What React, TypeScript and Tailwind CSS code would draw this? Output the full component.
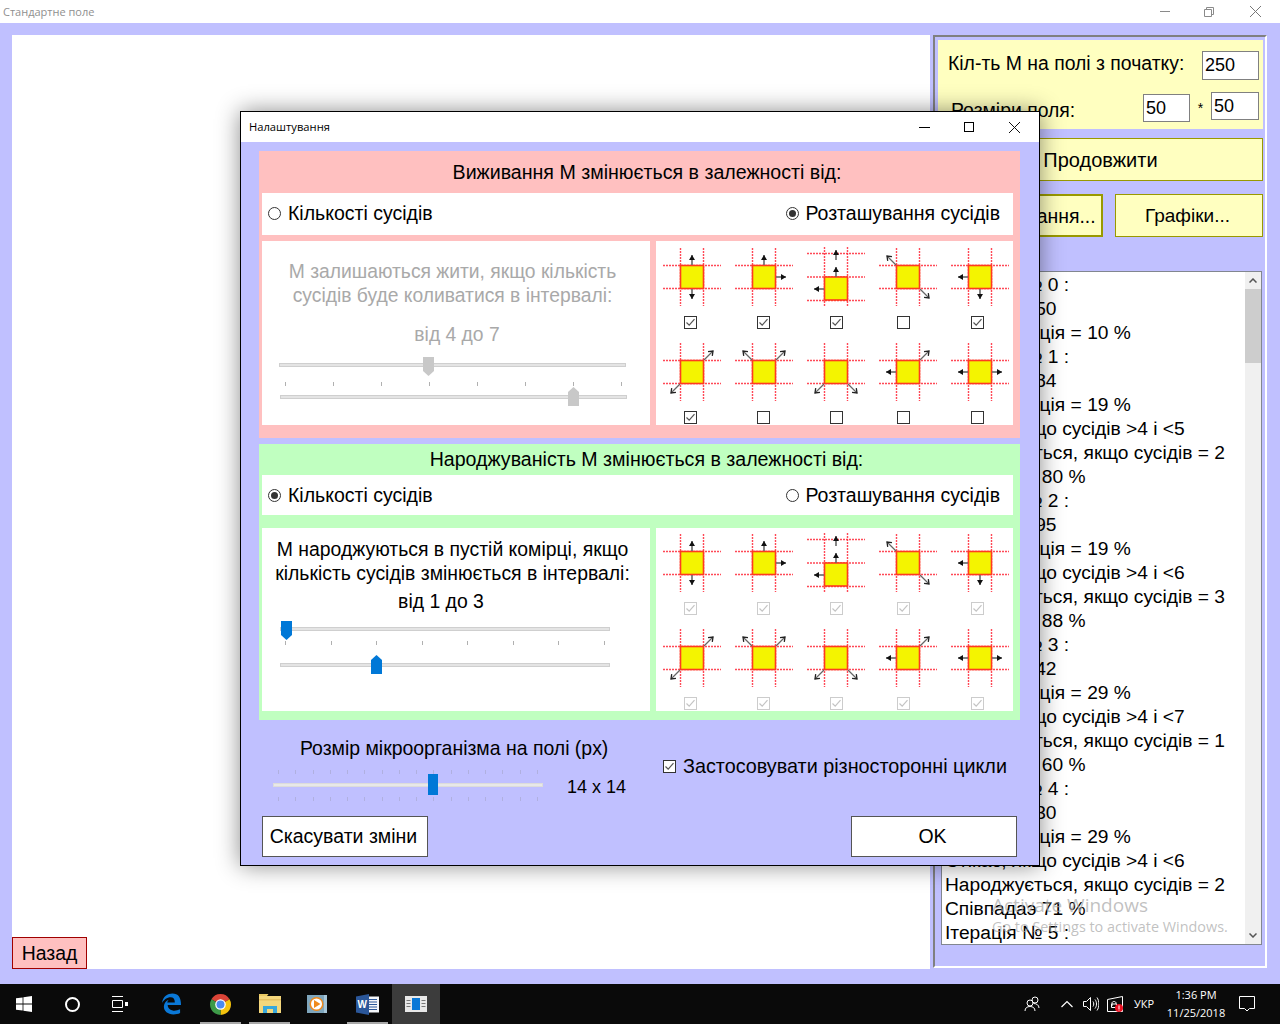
const dirs: Record<string, [number, number, number, number]> = {
  n: [29, 17, 29, 7],
  s: [29, 41, 29, 51],
  e: [41, 29, 51, 29],
  w: [17, 29, 7, 29],
  ne: [41, 17, 50, 8],
  nw: [17, 17, 8, 8],
  se: [41, 41, 50, 50],
  sw: [17, 41, 8, 50],
};

const Arrow = ({ x1, y1, x2, y2 }: { x1: number; y1: number; x2: number; y2: number }) => {
  const a = Math.atan2(y2 - y1, x2 - x1);
  const diagonal = x1 !== x2 && y1 !== y2;
  const p = (len: number, off: number) =>
    `${x2 - Math.cos(a) * len + Math.cos(a + Math.PI / 2) * off},${y2 - Math.sin(a) * len + Math.sin(a + Math.PI / 2) * off}`;
  return (
    <g>
      <line stroke="#666" strokeWidth={diagonal ? 1.2 : 1.6} x1={x1} x2={x2} y1={y1} y2={y2} />
      {diagonal ? (
        <polyline fill="none" points={`${p(4, 3)} ${p(0, 0)} ${p(4, -3)}`} stroke="#222" strokeWidth="1.3" />
      ) : (
        <polygon fill="#111" points={`${p(5, 3)} ${p(0, 0)} ${p(5, -3)}`} />
      )}
    </g>
  );
};

const NeighbourIcon = ({ arrows, tall }: { arrows?: string[]; tall?: boolean }) => {
  const lines = tall ? [5.5, 29, 52.5] : [17.5, 40.5];
  const sq = tall ? 29 : 17.5;
  return (
    <svg className="block overflow-visible" height="58" viewBox="0 0 58 58" width="58">
      {lines.map((y) => (
        <line key={y} opacity="0.85" stroke="#ff2a3a" strokeDasharray="2 1" strokeWidth="1.4" x1="0" x2="58" y1={y} y2={y} />
      ))}
      {[17.5, 40.5].map((x) => (
        <line
          key={x}
          opacity="0.85"
          stroke="#ff2a3a"
          strokeDasharray="2 1"
          strokeWidth="1.4"
          x1={x}
          x2={x}
          y1={tall ? -1 : 0}
          y2={tall ? 59 : 58}
        />
      ))}
      <rect fill="#f4f400" height="23" stroke="#ff3b20" strokeWidth="1.6" width="23" x="17.5" y={sq} />
      {tall ? (
        <>
          <Arrow x1={29} x2={29} y1={29} y2={19} />
          <Arrow x1={29} x2={29} y1={12} y2={2} />
          <Arrow x1={17} x2={7} y1={41} y2={41} />
        </>
      ) : (
        arrows?.map((d) => {
          const [x1, y1, x2, y2] = dirs[d];
          return <Arrow key={d} x1={x1} x2={x2} y1={y1} y2={y2} />;
        })
      )}
    </svg>
  );
};

const Check = ({ checked, disabled, className }: { checked?: boolean; disabled?: boolean; className?: string }) => (
  <div
    className={`flex h-[13px] w-[13px] shrink-0 items-center justify-center border bg-white ${
      disabled ? 'border-[#cccccc]' : 'border-[#333333]'
    } ${className ?? ''}`}
  >
    {checked && (
      <svg height="11" viewBox="0 0 11 11" width="11">
        <path d="M1.5 5.5 L4.2 8.2 L9.5 2.2" fill="none" stroke={disabled ? '#c4c4c4' : '#555'} strokeWidth="1.2" />
      </svg>
    )}
  </div>
);

const Radio = ({ on }: { on?: boolean }) => (
  <div className="flex h-[13px] w-[13px] items-center justify-center rounded-full border border-[#333333] bg-white">
    {on && <div className="h-[7px] w-[7px] rounded-full bg-[#333333]" />}
  </div>
);

const iconCols = ['ml-[21px]', 'ml-[22px]', 'ml-[23px]', 'ml-[18px]', 'ml-[20px]'];

const IconGrid = ({
  checks,
  disabled,
  className,
}: {
  checks: boolean[];
  disabled?: boolean;
  className: string;
}) => {
  const cells: { arrows?: string[]; tall?: boolean }[] = [
    { arrows: ['n', 's'] },
    { arrows: ['n', 'e'] },
    { tall: true },
    { arrows: ['nw', 'se'] },
    { arrows: ['w', 's'] },
    { arrows: ['ne', 'sw'] },
    { arrows: ['nw', 'ne'] },
    { arrows: ['sw', 'se'] },
    { arrows: ['w', 'ne'] },
    { arrows: ['w', 'e'] },
  ];
  return (
    <div
      className={`grid w-[357px] grid-cols-[72px_72px_72px_72px_58px] content-start gap-y-[14px] bg-white pl-[7px] ${className}`}
    >
      {cells.map((c, i) => (
        <div key={i}>
          <NeighbourIcon arrows={c.arrows} tall={c.tall} />
          <Check checked={checks[i]} className={`mt-[10px] ${iconCols[i % 5]}`} disabled={disabled} />
        </div>
      ))}
    </div>
  );
};

const Track = ({
  className,
  thumbClass,
  up,
  color,
}: {
  className: string;
  thumbClass: string;
  up?: boolean;
  color: string;
}) => (
  <div className={`relative h-[4px] border border-[#cfcfcf] bg-[#e4e4e4] ${className}`}>
    <svg className={`absolute ${up ? '-top-[9px]' : '-top-[7px]'} ${thumbClass}`} height="19" viewBox="0 0 11 19" width="11">
      <polygon fill={color} points={up ? '5.5,0 11,5 11,19 0,19 0,5' : '0,0 11,0 11,14 5.5,19 0,14'} />
    </svg>
  </div>
);

const Ticks = ({ className, count = 8, tick }: { className: string; count?: number; tick: string }) => (
  <div className={`flex justify-between ${className}`}>
    {Array.from({ length: count }).map((_, i) => (
      <div className={`h-[4px] w-px ${tick}`} key={i} />
    ))}
  </div>
);

const RadioRow = ({ first, className }: { first: boolean; className: string }) => (
  <div className={`flex items-center justify-between bg-white pr-[13px] pl-[6px] ${className}`}>
    <div className="flex items-center gap-[7px]">
      <Radio on={first} />
      <span>Кількості сусідів</span>
    </div>
    <div className="flex items-center gap-[6px]">
      <Radio on={!first} />
      <span>Розташування сусідів</span>
    </div>
  </div>
);

const log = [
  'Ітерація № 0 :',
  'К-ть М = 250',
  'Концентрація = 10 %',
  'Ітерація № 1 :',
  'К-ть М = 484',
  'Концентрація = 19 %',
  'Стікає, якщо сусідів >4 і <5',
  'Народжується, якщо сусідів = 2',
  'Співпадає 80 %',
  'Ітерація № 2 :',
  'К-ть М = 495',
  'Концентрація = 19 %',
  'Стікає, якщо сусідів >4 і <6',
  'Народжується, якщо сусідів = 3',
  'Співпадає 88 %',
  'Ітерація № 3 :',
  'К-ть М = 742',
  'Концентрація = 29 %',
  'Стікає, якщо сусідів >4 і <7',
  'Народжується, якщо сусідів = 1',
  'Співпадає 60 %',
  'Ітерація № 4 :',
  'К-ть М = 730',
  'Концентрація = 29 %',
  'Стікає, якщо сусідів >4 і <6',
  'Народжується, якщо сусідів = 2',
  'Співпадаэ 71 %',
  'Ітерація № 5 :',
];

const TaskCell = ({ children, active, open, className }: { children: React.ReactNode; active?: boolean; open?: boolean; className?: string }) => (
  <div className={`relative flex h-full items-center justify-center ${active ? 'bg-[#3c3c3c]' : ''} ${className ?? 'w-[49px]'}`}>
    {children}
    {open && <div className="absolute right-[4px] bottom-0 left-[4px] h-[2px] bg-[#a8a8a8]" />}
  </div>
);

const Taskbar = () => (
  <div className="flex h-[40px] items-center bg-[#0a0a0a] text-white">
    <TaskCell className="w-[48px]">
      <svg height="16" viewBox="0 0 16 16" width="16">
        <path d="M0 2.3 L6.6 1.4 V7.6 H0Z M7.4 1.3 L16 0 V7.6 H7.4Z M0 8.4 H6.6 V14.6 L0 13.7Z M7.4 8.4 H16 V16 L7.4 14.7Z" fill="#fff" />
      </svg>
    </TaskCell>
    <TaskCell className="w-[48px]">
      <div className="h-[15px] w-[15px] rounded-full border-2 border-white" />
    </TaskCell>
    <TaskCell className="w-[51px] pr-[3px]">
      <svg fill="none" height="16" stroke="#fff" viewBox="0 0 16 16" width="16">
        <path d="M0 .5 H11 M0 15.5 H11 M.5 4.5 H10.5 V11.5 H.5Z M13 6.5 H16 M13 9.5 H16" />
        <rect fill="#fff" height="3" stroke="none" width="3" x="13" y="6" />
      </svg>
    </TaskCell>
    <TaskCell>
      <svg height="22" viewBox="0 0 22 22" width="21">
        <path
          d="M1 10 C2 3 7 0 12 0 C18 0 21 4 21 12 H7 C7 16 11 18 14 18 C16 18 18 17.500 20 16.500 V20.500 C18 21.500 15.500 22 13 22 C7 22 3 18.500 3 14 C3 11 4.500 8 8 6.500 C7 8 6.600 8.800 6.500 9.500 H14.500 C14.500 6 13 4 10 4 C6.500 4 3 6.500 1 10Z"
          fill="#0a78d7"
        />
      </svg>
    </TaskCell>
    <TaskCell open>
      <svg height="23" viewBox="0 0 24 24" width="23">
        <path d="M12 1 A11 11 0 0 1 21.500 6.500 L12 12 L2.500 6.500 A11 11 0 0 1 12 1Z" fill="#db4437" />
        <path d="M21.500 6.500 A11 11 0 0 1 12 23 L12 12Z" fill="#f4c20d" />
        <path d="M2.500 6.500 A11 11 0 0 0 12 23 L12 12Z" fill="#3d9a48" />
        <circle cx="12" cy="12" fill="#fff" r="5.500" />
        <circle cx="12" cy="12" fill="#4a8af0" r="4.200" />
      </svg>
    </TaskCell>
    <TaskCell open>
      <svg height="20" viewBox="0 0 22 20" width="22">
        <path d="M0 2 H8 L9.500 0 H0Z" fill="#e8c862" />
        <rect fill="#f4d77c" height="17" width="22" y="2" />
        <rect fill="#e5c060" height="1.500" width="22" y="5" />
        <path d="M4 19 V12 H18 V19 H14 V15 H8 V19Z" fill="#38a8dc" />
      </svg>
    </TaskCell>
    <TaskCell className="w-[49px] pr-[3px]">
      <svg height="20" viewBox="0 0 20 20" width="20">
        <rect fill="#7fa6bd" height="18" width="20" y="1" />
        <rect fill="#a8c6d8" height="18" width="3" x="17" y="1" />
        <circle cx="9.500" cy="10" fill="#f08a1c" r="7" />
        <circle cx="9.500" cy="10" fill="#fff" r="5.500" />
        <polygon fill="#f08a1c" points="7,6 13.500,10 7,14" />
      </svg>
    </TaskCell>
    <TaskCell open>
      <svg height="21" viewBox="0 0 23 21" width="23">
        <rect fill="#f4f6fa" height="16" width="12" x="11" y="2.500" />
        <path d="M13 5.500 H21 M13 8 H21 M13 10.500 H21 M13 13 H21 M13 15.500 H21" stroke="#2b579a" />
        <polygon fill="#2b579a" points="0,2.500 13,0 13,21 0,18.500" />
        <text fill="#fff" fontFamily="'Liberation Sans', sans-serif" fontSize="10" fontWeight="700" x="1.500" y="14">
          W
        </text>
      </svg>
    </TaskCell>
    <TaskCell active className="w-[48px]">
      <svg height="16" viewBox="0 0 22 16" width="22">
        <rect fill="#e8e8e8" height="16" width="22" />
        <rect fill="#0a78d7" height="12" width="8" x="7" y="2" />
        <path d="M1.500 4.500 H5.500 M1.500 7.500 H5.500 M1.500 10.500 H5.500 M16.500 4.500 H20.500 M16.500 7.500 H20.500 M16.500 10.500 H20.500" stroke="#777" />
      </svg>
    </TaskCell>

    <div className="ml-[572px] flex h-full items-center">
      <TaskCell className="w-[40px]">
        <svg fill="none" height="16" stroke="#fff" viewBox="0 0 16 16" width="16">
          <circle cx="11" cy="4" r="3" />
          <circle cx="6" cy="7" r="3" />
          <path d="M1 15 C1 12 3 10.500 6 10.500 C9 10.500 11 12 11 15 M9.500 7.500 C12.500 7.500 15 9 15 12" />
        </svg>
      </TaskCell>
      <TaskCell className="ml-[3px] w-[24px]">
        <svg fill="none" height="8" stroke="#fff" strokeWidth="1.200" viewBox="0 0 12 8" width="12">
          <path d="M.5 7 L6 1.500 L11.500 7" />
        </svg>
      </TaskCell>
      <TaskCell className="w-[24px]">
        <svg fill="none" height="16" stroke="#fff" viewBox="0 0 16 16" width="16">
          <path d="M.5 5.500 H3.500 L7.500 1.500 V14.500 L3.500 10.500 H.5Z M10 5.500 C11 7 11 9 10 10.500 M12 3.500 C14 6 14 10 12 12.500 M14 1.500 C16.500 5 16.500 11 14 14.500" />
        </svg>
      </TaskCell>
      <TaskCell className="w-[24px]">
        <svg height="16" viewBox="0 0 16 16" width="16">
          <path d="M.5 3.500 L15.500 .5 V15.500 H.5Z" fill="none" stroke="#fff" />
          <path d="M5 10 V7 C5 5 9 5 9 7 V8 M4.500 8 H9.500 V11.500 H4.500Z" fill="none" stroke="#fff" />
          <circle cx="12" cy="12" fill="#e81123" r="4" />
          <rect fill="#fff" height="3.500" width="1" x="11.500" y="9.500" />
          <rect fill="#fff" height="1" width="1" x="11.500" y="13.500" />
        </svg>
      </TaskCell>
      <TaskCell className="w-[34px]">
        <span className="font-['Open_Sans',sans-serif] text-[11px]">УКР</span>
      </TaskCell>
      <div className="flex w-[70px] flex-col items-center text-center font-['Open_Sans',sans-serif] text-[11px] leading-[18px]">
        <span>1:36 PM</span>
        <span>11/25/2018</span>
      </div>
      <TaskCell className="ml-[4px] w-[24px]">
        <svg fill="none" height="16" stroke="#fff" viewBox="0 0 16 16" width="16">
          <path d="M.5 .5 H15.500 V12.500 H10.500 L8 15 L5.500 12.500 H.5Z" />
        </svg>
      </TaskCell>
    </div>
  </div>
);

const Dialog = () => (
  <div className="absolute top-[111px] left-[240px] flex h-[755px] w-[800px] flex-col border border-black bg-[#c0c0ff] text-[19.5px] leading-[24px] text-black shadow-[0_0_22px_rgba(0,0,0,0.45)]">
    <div className="flex h-[30px] items-center justify-between bg-white pr-[2px] pl-[8px]">
      <span className="font-['Open_Sans',sans-serif] text-[11.200px]">Налаштування</span>
      <div className="flex h-full">
        <div className="flex w-[45px] items-center justify-center">
          <div className="h-px w-[11px] bg-black" />
        </div>
        <div className="flex w-[45px] items-center justify-center pr-[1px]">
          <div className="h-[10px] w-[10px] border border-black" />
        </div>
        <div className="flex w-[45px] items-center justify-center">
          <svg height="11" stroke="#111" viewBox="0 0 11 11" width="11">
            <path d="M0 0 L11 11 M11 0 L0 11" />
          </svg>
        </div>
      </div>
    </div>

    <div className="flex flex-col pt-[9px] pl-[18px]">
      {/* Виживання */}
      <div className="h-[287px] w-[761px] bg-[#ffc0c0] pl-[3px]">
        <div className="pt-[9px] pl-[12px] text-center text-[19.600px]">Виживання М змінюється в залежності від:</div>
        <RadioRow className="mt-[9px] h-[42px] w-[751px] pb-[2px]" first={false} />
        <div className="mt-[6px] flex gap-[6px]">
          <div className="h-[184px] w-[388px] bg-white pt-[19px] text-[19.300px] text-[#a9a9a9]">
            <div className="pr-[7px] text-center">
              М залишаються жити, якщо кількість
              <br />
              сусідів буде коливатися в інтервалі:
            </div>
            <div className="mt-[15px] pl-[2px] text-center">від 4 до 7</div>
            <Track className="mt-[16px] ml-[17px] w-[347px]" color="#c8c8c8" thumbClass="left-[143px]" />
            <Ticks className="mt-[15px] ml-[23px] w-[337px]" tick="bg-[#b0b0b0]" />
            <Track className="mt-[9px] ml-[18px] w-[347px]" color="#c8c8c8" thumbClass="left-[287px]" up />
          </div>
          <IconGrid
            checks={[true, true, true, false, true, true, false, false, false, false]}
            className="h-[184px] pt-[7px]"
          />
        </div>
      </div>

      {/* Народжуваність */}
      <div className="mt-[6px] h-[276px] w-[761px] bg-[#c0ffc0] pl-[3px]">
        <div className="pt-[3px] pl-[11px] text-center text-[19.600px]">Народжуваність М змінюється в залежності від:</div>
        <RadioRow className="mt-[4px] h-[40px] w-[751px]" first />
        <div className="mt-[13px] flex gap-[6px]">
          <div className="h-[183px] w-[388px] bg-white pt-[9px] text-[19.400px]">
            <div className="pr-[7px] text-center">
              М народжуються в пустій комірці, якщо
              <br />
              кількість сусідів змінюється в інтервалі:
            </div>
            <div className="mt-[4px] pr-[30px] text-center">від 1 до 3</div>
            <Track className="mt-[14px] ml-[18px] w-[330px]" color="#0078d7" thumbClass="left-0" />
            <Ticks className="mt-[10px] ml-[23px] w-[320px]" tick="bg-[#b0b0b0]" />
            <Track className="mt-[18px] ml-[18px] w-[330px]" color="#0078d7" thumbClass="left-[90px]" up />
          </div>
          <IconGrid checks={Array(10).fill(true)} className="h-[183px] pt-[6px]" disabled />
        </div>
      </div>

      {/* Розмір */}
      <div className="flex w-[761px]">
        <div className="w-[404px] pt-[16px] pl-[14px]">
          <div className="ml-[27px] text-[19.450px]">Розмір мікроорганізма на полі (px)</div>
          <div className="mt-[10px] flex items-center">
            <div className="relative w-[270px]">
              <Ticks className="ml-[5px] w-[260px]" count={16} tick="bg-[#b0b0e0]" />
              <div className="mt-[9px] h-[4px] border border-[#dcdcdc] bg-[#e8e8e8]" />
              <Ticks className="mt-[10px] ml-[5px] w-[260px]" count={16} tick="bg-[#b0b0e0]" />
              <div className="absolute top-[4px] left-[155px] h-[21px] w-[10px] bg-[#0078d7]" />
            </div>
            <span className="ml-[24px] pt-[2px] text-[18px]">14 x 14</span>
          </div>
        </div>
        <div className="flex items-center gap-[7px] self-start pt-[34px] text-[19.800px]">
          <Check checked />
          <span>Застосовувати різносторонні цикли</span>
        </div>
      </div>

      <div className="mt-[15px] ml-[3px] flex w-[755px] justify-between">
        <div className="flex h-[41px] w-[166px] items-center justify-center border border-[#555555] bg-white pr-[3px] pb-[2px]">
          Скасувати зміни
        </div>
        <div className="flex h-[41px] w-[166px] items-center justify-center border border-[#555555] bg-white pr-[3px] pb-[2px]">OK</div>
      </div>
    </div>
  </div>
);

export default function App() {
  return (
    <div className="relative flex h-[1024px] w-[1280px] flex-col overflow-hidden bg-[#c0c0ff] font-['Liberation_Sans',sans-serif] text-[19.400px] leading-[24px] text-black">
      {/* title bar */}
      <div className="flex h-[23px] items-center justify-between bg-white pr-[2px] pl-[3px]">
        <span className="font-['Open_Sans',sans-serif] text-[11px] text-[#8f8f8f]">Стандартне поле</span>
        <div className="flex h-full">
          <div className="flex w-[45px] items-center justify-center pl-[2px]">
            <div className="h-px w-[10px] bg-[#8a8a8a]" />
          </div>
          <div className="flex w-[47px] items-center justify-center pr-[2px]">
            <svg fill="none" height="10" stroke="#8a8a8a" viewBox="0 0 10 10" width="10">
              <path d="M.5 2.500 H7.500 V9.500 H.5Z M2.500 2.500 V.5 H9.500 V7.500 H7.500" />
            </svg>
          </div>
          <div className="flex w-[45px] items-center justify-center">
            <svg height="11" stroke="#777" viewBox="0 0 11 11" width="11">
              <path d="M0 0 L11 11 M11 0 L0 11" />
            </svg>
          </div>
        </div>
      </div>

      {/* main */}
      <div className="flex h-[961px] pt-[12px] pl-[12px]">
        <div className="flex h-[934px] w-[918px] flex-col justify-end bg-white">
          <div className="flex h-[32px] w-[75px] items-center justify-center border border-[#a00000] bg-[#ffc0c0]">
            Назад
          </div>
        </div>

        <div className="ml-[3px] h-[933px] w-[334px] border-2 border-t-[#808080] border-r-white border-b-white border-l-[#808080] pt-[3px] pl-[3px]">
          <div className="h-[89px] w-[325px] bg-[#ffffc0]">
            <div className="flex pt-[11px]">
              <span className="ml-[10px]">Кіл-ть М на полі з початку:</span>
              <div className="mr-[4px] ml-auto h-[29px] w-[57px] border border-[#808080] bg-white pt-[1px] pl-[2px] text-[18px]">250</div>
            </div>
            <div className="mt-[12px] flex items-start">
              <span className="mt-[6px] ml-[13px]">Розміри поля:</span>
              <div className="mt-[2px] ml-auto h-[28px] w-[47px] border border-[#808080] bg-white pt-[1px] pl-[2px] text-[18px]">50</div>
              <span className="mt-[4px] w-[21px] text-center text-[14px]">*</span>
              <div className="mr-[4px] h-[28px] w-[48px] border border-[#808080] bg-white pt-[1px] pl-[2px] text-[18px]">50</div>
            </div>
          </div>

          <div className="mt-[9px] flex h-[43px] w-[325px] items-center justify-center border border-[#999900] bg-[#ffffc0] pt-[1px] text-[20px]">
            Продовжити
          </div>
          <div className="mt-[13px] flex w-[325px] gap-[12px]">
            <div className="flex h-[43px] w-[165px] items-center justify-center border-2 border-[#999900] bg-[#ffffc0]">
              Налаштування...
            </div>
            <div className="flex h-[43px] w-[148px] items-center justify-center border border-[#999900] bg-[#ffffc0] pr-[3px] text-[19px]">
              Графіки...
            </div>
          </div>

          <div className="mt-[34px] ml-[3px] flex h-[674px] w-[321px] border border-[#828790] bg-white">
            <div className="h-full flex-1 overflow-hidden pt-px pl-[3px] text-[19.200px] whitespace-nowrap">
              {log.map((line, i) => (
                <div className="h-[24px]" key={i}>
                  {line}
                </div>
              ))}
            </div>
            <div className="flex w-[16px] flex-col bg-[#f0f0f0]">
              <div className="flex h-[17px] items-center justify-center">
                <svg fill="none" height="5" stroke="#555" strokeWidth="1.500" viewBox="0 0 8 5" width="8">
                  <path d="M.5 4.500 L4 1 L7.500 4.500" />
                </svg>
              </div>
              <div className="h-[74px] bg-[#cdcdcd]" />
              <div className="flex-1" />
              <div className="flex h-[17px] items-center justify-center">
                <svg fill="none" height="5" stroke="#555" strokeWidth="1.500" viewBox="0 0 8 5" width="8">
                  <path d="M.5 .5 L4 4 L7.500 .5" />
                </svg>
              </div>
            </div>
          </div>
        </div>
      </div>

      <Taskbar />

      <Dialog />

      {/* watermark */}
      <div className="absolute top-[892px] left-[992px] font-['Open_Sans',sans-serif] text-[#a6a6a6]/70">
        <div className="text-[19px] leading-[26px]">Activate Windows</div>
        <div className="mt-[-1px] text-[14.400px] leading-[20px]">Go to Settings to activate Windows.</div>
      </div>
    </div>
  );
}
